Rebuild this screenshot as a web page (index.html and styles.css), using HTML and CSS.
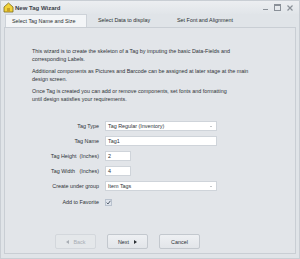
FILE: index.html
```html
<!DOCTYPE html>
<html lang="en">

<head>
    <meta charset="UTF-8">
    <title>New Tag Wizard</title>
    <link rel="stylesheet" href="styles.css">
</head>

<body>
    <div class="window">
        <!-- Title bar -->
        <div class="titlebar">
            <svg class="app-icon" width="11" height="11" viewBox="0 0 11 11">
                <path d="M1 5 L5.5 1 L10 5 L10 10 L1 10 Z" fill="#f2d23a" stroke="#7a6a20" stroke-width="0.8"/>
                <rect x="4" y="6" width="3" height="4" fill="#c9a224"/>
            </svg>
            <span class="title">New Tag Wizard</span>
            <div class="controls">
                <span class="ctl-min"></span>
                <span class="ctl-max"></span>
                <svg class="ctl-close" width="6" height="6" viewBox="0 0 6 6">
                    <path d="M0.5 0.5 L5.5 5.5 M5.5 0.5 L0.5 5.5" stroke="#8a9098" stroke-width="1.2"/>
                </svg>
            </div>
        </div>

        <!-- Tabs -->
        <div class="tabs">
            <div class="tab active">Select Tag Name and Size</div>
            <div class="tab">Select Data to display</div>
            <div class="tab">Set Font and Alignment</div>
        </div>

        <div class="panel">
            <div class="intro">
                <p>This wizard is to create the skeleton of a Tag by imputing the basic Data-Fields and<br>corresponding Labels.</p>
                <p>Additional components as Pictures and Barcode can be assigned at later stage at the main<br>design screen.</p>
                <p>Once Tag is created you can add or remove components, set fonts and formatting<br>until design satisfies your requirements.</p>
            </div>

            <div class="form">
                <label>Tag Type</label>
                <div class="field select">Tag Regular (Inventory)<span class="arrow"></span></div>

                <label>Tag Name</label>
                <div class="field">Tag1</div>

                <label>Tag Height&nbsp; (Inches)</label>
                <div class="field short">2</div>

                <label>Tag Width&nbsp;&nbsp; (Inches)</label>
                <div class="field short">4</div>

                <label>Create under group</label>
                <div class="field select">Item Tags<span class="arrow"></span></div>

                <label class="fav">Add to Favorite</label>
                <div class="check">
                    <svg width="5" height="5" viewBox="0 0 5 5">
                        <path d="M0.6 2.6 L2 4 L4.4 0.8" fill="none" stroke="#4a5563" stroke-width="0.9"/>
                    </svg>
                </div>
            </div>

            <div class="buttons">
                <div class="btn disabled"><span class="tri-left"></span>Back</div>
                <div class="btn">Next<span class="tri-right"></span></div>
                <div class="btn">Cancel</div>
            </div>
        </div>
    </div>
</body>

</html>
```

FILE: styles.css
```css
/* New Tag Wizard */

body {
    margin: 0;
    padding: 0;
    font-family: "Liberation Sans", Arial, sans-serif;
    color: #2e3338;
}

.window {
    width: 300px;
    height: 259px;
    box-sizing: border-box;
    background-color: #e0e4e8;
    border: 1px solid #c9ced4;
    display: flex;
    flex-direction: column;
}

.titlebar {
    height: 13px;
    display: flex;
    align-items: center;
    background: linear-gradient(#eceef1, #e1e5e9);
}

.app-icon {
    margin-left: 2px;
    margin-right: 1px;
}

.title {
    font-size: 6px;
    font-weight: bold;
    color: #3c4148;
}

.controls {
    margin-left: auto;
    margin-right: 6px;
    display: flex;
    align-items: center;
    gap: 6px;
}

.ctl-min {
    width: 5px;
    height: 1px;
    margin-top: 4px;
    background-color: #8a9098;
}

.ctl-max {
    width: 5px;
    height: 4px;
    border: 1px solid #8a9098;
    border-top-width: 2px;
}

.tabs {
    display: flex;
    height: 13px;
    padding-left: 4px;
}

.tab {
    font-size: 5.4px;
    color: #2b2f33;
    line-height: 13px;
    padding: 0 6px;
}

.tab.active {
    background-color: #f3f5f7;
    border: 1px solid #cdd2d8;
    border-bottom: none;
    line-height: 12px;
    width: 68px;
    margin-right: 5px;
}

.tab:nth-child(2) {
    width: 67px;
}

.panel {
    flex: 1;
    margin: 0 3px 4px 3px;
    border: 1px solid #c9ced4;
    background-color: #e2e5e9;
    display: flex;
    flex-direction: column;
}

.intro {
    padding: 20px 0 0 27px;
}

.intro p {
    margin: 0 0 5px 0;
    font-size: 5.4px;
    line-height: 7.5px;
    color: #2e3338;
}

.form {
    display: grid;
    grid-template-columns: 94px 112px;
    grid-auto-rows: 10px;
    column-gap: 6px;
    row-gap: 5px;
    margin-top: 13px;
    font-size: 5.4px;
}

.form label {
    text-align: right;
    line-height: 10px;
    color: #2e3338;
}

.field {
    box-sizing: border-box;
    height: 10px;
    background-color: #ffffff;
    border: 1px solid #cfd4da;
    line-height: 8px;
    padding-left: 2px;
    position: relative;
}

.field.short {
    width: 26px;
}

.arrow {
    position: absolute;
    right: 4px;
    top: 3.5px;
    border-left: 1.5px solid transparent;
    border-right: 1.5px solid transparent;
    border-top: 1.5px solid #8a9098;
}

.form .fav {
    line-height: 12px;
}

.check {
    box-sizing: border-box;
    width: 7px;
    height: 7px;
    margin-top: 3px;
    background-color: #dfe4ec;
    border: 1px solid #b9c2ce;
    display: flex;
    align-items: center;
    justify-content: center;
}

.buttons {
    display: flex;
    gap: 11px;
    margin-top: auto;
    margin-bottom: 4px;
    padding-left: 50px;
}

.btn {
    box-sizing: border-box;
    width: 41px;
    height: 15px;
    border: 1px solid #c3c8ce;
    border-radius: 2px;
    background: linear-gradient(#eef0f3, #e2e5e9);
    font-size: 5.4px;
    color: #2b2f33;
    display: flex;
    align-items: center;
    justify-content: center;
    gap: 5px;
}

.btn.disabled {
    color: #a8adb3;
    border-color: #d3d7dc;
    background: #e4e7ea;
}

.tri-left {
    border-top: 2.5px solid transparent;
    border-bottom: 2.5px solid transparent;
    border-right: 3px solid #a8adb3;
}

.tri-right {
    border-top: 2.5px solid transparent;
    border-bottom: 2.5px solid transparent;
    border-left: 3px solid #2b2f33;
}
```
